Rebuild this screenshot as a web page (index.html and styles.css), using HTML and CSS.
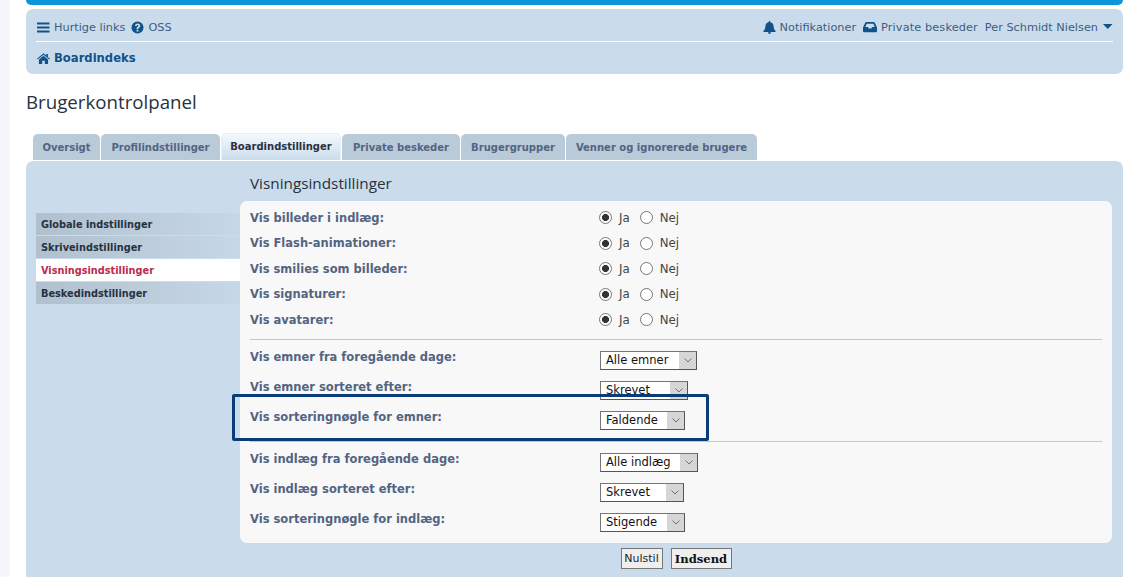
FILE: index.html
```html
<!DOCTYPE html>
<html lang="da">
<head>
<meta charset="utf-8">
<title>Brugerkontrolpanel</title>
<link rel="stylesheet" href="styles.css">
</head>
<body>
<div class="wrap">
  <div class="topbar"></div>
  <nav class="navbar">
    <div class="navrow">
      <div class="navgroup">
        <a class="navlink"><svg class="ico" viewBox="0 0 14 14"><path d="M0 1.5h13.5v2.2H0zM0 5.9h13.5v2.2H0zM0 10.300h13.5v2.200H0z"/></svg>Hurtige links</a>
        <a class="navlink"><svg class="ico" viewBox="0 0 14 14"><path fill-rule="evenodd" d="M7 .5a6.500 6.500 0 1 0 0 13 6.500 6.500 0 0 0 0-13zM6 9.300h2v1.900H6zM4.200 5.400C4.300 3.700 5.500 2.700 7.100 2.700c1.600 0 2.900 1 2.900 2.400 0 1.200-.7 1.700-1.400 2.200-.5.300-.7.500-.7 1v.3H6v-.5c0-1 .5-1.500 1.200-2 .5-.3.800-.5.800-1 0-.4-.4-.8-.9-.8-.6 0-1 .4-1.100 1z"/></svg>OSS</a>
      </div>
      <div class="navgroup right">
        <a class="navlink"><svg class="ico" viewBox="0 0 14 14"><path d="M7 0c.5 0 .9.400.9.900v.4c2.100.4 3.500 2 3.500 4.200 0 3.500 1.300 4.400 2.100 5.300.2.200.3.400.2.600-.1.300-.3.400-.6.400H.9c-.3 0-.5-.1-.6-.4-.1-.2 0-.4.2-.6.800-.9 2.100-1.800 2.100-5.300 0-2.200 1.400-3.800 3.500-4.200V.9C6.100.400 6.500 0 7 0zM5.300 12.200h3.400C8.700 13.200 7.900 14 7 14s-1.700-.8-1.700-1.800z"/></svg>Notifikationer</a>
        <a class="navlink spaced"><svg class="ico wide" viewBox="0 0 14 14"><path fill-rule="evenodd" d="M3.300 2h7.400c.5 0 .9.300 1.100.7L13.800 7c.1.200.2.500.2.700v3.300c0 .7-.6 1.300-1.300 1.300H1.300C.6 12.300 0 11.700 0 11V7.700c0-.2.100-.5.200-.7l2-4.300c.2-.4.600-.7 1.100-.7zM3.700 3.700 2.200 7h2.700l.8 1.500h2.600L9.100 7h2.700l-1.500-3.300z"/></svg>Private beskeder</a>
        <a class="navlink">Per Schmidt Nielsen<svg class="caret" viewBox="0 0 10 6"><path d="M0 0h9.500L4.750 5z"/></svg></a>
      </div>
    </div>
    <div class="navrow crumbs">
      <a class="crumb"><svg class="ico" viewBox="0 0 14 14"><path d="M7 1.400 0 7.200l.7.900L7 2.900l6.300 5.200.7-.9-2.300-1.900V2.200h-1.800v1.600zM2.100 8.200v4.700h3.500V9.500h2.800v3.400h3.500V8.200L7 4.100z"/></svg>Boardindeks</a>
    </div>
  </nav>

  <h2 class="pagetitle">Brugerkontrolpanel</h2>

  <div class="tabs">
    <a class="tab">Oversigt</a>
    <a class="tab">Profilindstillinger</a>
    <a class="tab active">Boardindstillinger</a>
    <a class="tab">Private beskeder</a>
    <a class="tab">Brugergrupper</a>
    <a class="tab">Venner og ignorerede brugere</a>
  </div>

  <section class="panel">
    <aside class="side">
      <a class="sideitem">Globale indstillinger</a>
      <a class="sideitem">Skriveindstillinger</a>
      <a class="sideitem current">Visningsindstillinger</a>
      <a class="sideitem">Beskedindstillinger</a>
    </aside>
    <div class="main">
      <h2 class="maintitle">Visningsindstillinger</h2>
      <div class="box">
        <div class="group radios">
          <div class="row"><span class="lbl">Vis billeder i indlæg:</span><span class="ctl"><i class="radio on"></i><span class="opt">Ja</span><i class="radio"></i><span class="opt">Nej</span></span></div>
          <div class="row"><span class="lbl">Vis Flash-animationer:</span><span class="ctl"><i class="radio on"></i><span class="opt">Ja</span><i class="radio"></i><span class="opt">Nej</span></span></div>
          <div class="row"><span class="lbl">Vis smilies som billeder:</span><span class="ctl"><i class="radio on"></i><span class="opt">Ja</span><i class="radio"></i><span class="opt">Nej</span></span></div>
          <div class="row"><span class="lbl">Vis signaturer:</span><span class="ctl"><i class="radio on"></i><span class="opt">Ja</span><i class="radio"></i><span class="opt">Nej</span></span></div>
          <div class="row"><span class="lbl">Vis avatarer:</span><span class="ctl"><i class="radio on"></i><span class="opt">Ja</span><i class="radio"></i><span class="opt">Nej</span></span></div>
        </div>
        <div class="group selects">
          <div class="row"><span class="lbl">Vis emner fra foregående dage:</span><span class="ctl"><span class="sel w97">Alle emner<b class="arrow"><svg viewBox="0 0 8 5"><path d="M.5.500 4 4 7.500.500"/></svg></b></span></span></div>
          <div class="row"><span class="lbl">Vis emner sorteret efter:</span><span class="ctl"><span class="sel w88">Skrevet<b class="arrow"><svg viewBox="0 0 8 5"><path d="M.5.500 4 4 7.500.500"/></svg></b></span></span></div>
          <div class="row"><span class="lbl">Vis sorteringnøgle for emner:</span><span class="ctl"><span class="sel w85">Faldende<b class="arrow"><svg viewBox="0 0 8 5"><path d="M.5.500 4 4 7.500.500"/></svg></b></span></span></div>
        </div>
        <div class="group selects">
          <div class="row"><span class="lbl">Vis indlæg fra foregående dage:</span><span class="ctl"><span class="sel w98">Alle indlæg<b class="arrow"><svg viewBox="0 0 8 5"><path d="M.5.500 4 4 7.500.500"/></svg></b></span></span></div>
          <div class="row"><span class="lbl">Vis indlæg sorteret efter:</span><span class="ctl"><span class="sel w84">Skrevet<b class="arrow"><svg viewBox="0 0 8 5"><path d="M.5.500 4 4 7.500.500"/></svg></b></span></span></div>
          <div class="row"><span class="lbl">Vis sorteringnøgle for indlæg:</span><span class="ctl"><span class="sel w85">Stigende<b class="arrow"><svg viewBox="0 0 8 5"><path d="M.5.500 4 4 7.500.500"/></svg></b></span></span></div>
        </div>
      </div>
      <div class="actions">
        <button class="btn" type="button">Nulstil</button>
        <button class="btn strong" type="button">Indsend</button>
      </div>
    </div>
  </section>
</div>
<div class="annotation"></div>
</body>
</html>
```
FILE: styles.css
```css
* { box-sizing: border-box; }
html, body { margin: 0; height: 577px; overflow: hidden; }
body {
  position: relative;
  background: #f5f7fa;
  font-family: "DejaVu Sans", Verdana, sans-serif;
  font-size: 11px;
  color: #536482;
  padding-left: 10px;
}
.wrap { background: #fff; height: 577px; padding-left: 16px; overflow: hidden; }
a { text-decoration: none; }

.topbar { height: 5px; background: #0d95d9; border-radius: 0 0 7px 7px; }
.navbar {
  margin-top: 4px;
  height: 65px;
  background: #cadceb;
  border-radius: 7px;
  padding: 0 10px;
}
.navrow { display: flex; justify-content: space-between; align-items: center; }
.navrow:first-child { height: 33px; border-bottom: 1px solid #fff; padding-top: 4px; }
.navgroup { display: flex; gap: 6px; align-items: center; padding-left: 1px; }
.navgroup.right { gap: 7px; padding-left: 0; }
.navlink { display: inline-flex; align-items: center; color: #3d5c82; font-size: 11.300px; white-space: nowrap; }
.navlink.spaced { letter-spacing: .12px; }
.ico { width: 13px; height: 13px; margin-right: 4px; fill: #105289; flex: none; }
.ico.wide { width: 14px; height: 14px; }
.caret { width: 10px; height: 6px; margin-left: 5px; fill: #105289; }
.crumbs { justify-content: flex-start; height: 32px; padding-left: 1px; }
.crumb { display: inline-flex; align-items: center; font-weight: bold; color: #105289; font-size: 11.600px; }

.pagetitle {
  margin: 0;
  padding-top: 16px;
  height: 59px;
  font-family: "Open Sans", "Noto Sans", sans-serif;
  font-weight: 400;
  font-size: 18.700px;
  line-height: 24px;
  color: #28313f;
}

.tabs { display: flex; gap: 1px; padding-left: 7px; height: 27px; align-items: flex-end; }
.tab {
  height: 26px;
  display: flex;
  align-items: center;
  justify-content: center;
  background: #b9cad9;
  border-radius: 5px 5px 0 0;
  font-size: 10px;
  font-weight: bold;
  color: #536482;
  white-space: nowrap;
}
.tab:nth-child(1) { width: 67px; }
.tab:nth-child(2) { width: 119px; }
.tab:nth-child(3) { width: 120px; }
.tab:nth-child(4) { width: 118px; }
.tab:nth-child(5) { width: 104px; }
.tab:nth-child(6) { width: 191px; }
.tab.active {
  height: 27px;
  position: relative;
  background: linear-gradient(#f4f9fd, #cadceb);
  border: 1px solid #e6eff6;
  border-bottom: 0;
  color: #28313f;
  padding-bottom: 2px;
}

.panel {
  margin-top: 1px;
  height: 430px;
  background: #cadceb;
  border-radius: 7px;
  padding-left: 10px;
  display: flex;
}
.side { width: 204px; flex: none; padding-top: 52px; display: flex; flex-direction: column; }
.sideitem {
  height: 22px;
  margin-bottom: 1px;
  padding-left: 5px;
  display: flex;
  align-items: center;
  font-size: 9.750px;
  font-weight: bold;
  color: #28313f;
  background: linear-gradient(90deg, #b0c0cf, #c6d7e6);
}
.sideitem.current { background: #fff; color: #bc2a4d; }

.main { width: 872px; flex: none; }
.maintitle {
  margin: 0;
  height: 40px;
  padding: 12px 0 0 10px;
  font-family: "Open Sans", "Noto Sans", sans-serif;
  font-weight: 400;
  font-size: 15.300px;
  line-height: 20px;
  color: #28313f;
}
.box {
  height: 342px;
  background: #f8f8f8;
  border-radius: 7px;
  padding: 4px 10px 0;
}
.group { display: flex; flex-direction: column; }
.group.radios { height: 134px; }
.group.radios .row { height: 25.500px; }
.group.selects { border-top: 1px solid #b9c9d8; height: 102px; padding-top: 5px; }
.group.selects .row { height: 30px; }
.row { display: flex; align-items: center; flex: none; }
.lbl { width: 350px; flex: none; font-size: 11.500px; font-weight: bold; color: #536482; }
.selects .lbl { position: relative; top: -3px; }
.ctl { display: flex; align-items: center; color: #333; }
.radios .ctl { margin-left: -1px; }
.radio {
  width: 13px; height: 13px;
  border: 1px solid #777;
  border-radius: 50%;
  background: #fff;
  display: block;
  flex: none;
}
.radio.on { background: radial-gradient(circle, #333 0 3.200px, #fff 3.800px); }
.opt { font-size: 11.800px; color: #444; margin: 0 10px 0 7px; }

.sel {
  display: flex;
  align-items: center;
  justify-content: space-between;
  height: 19px;
  background: #fff;
  border: 1px solid #767676;
  border-right-color: #555;
  border-bottom-color: #555;
  font-size: 11.500px;
  color: #111;
  padding-left: 5px;
}
.w97 { width: 97px; }
.w88 { width: 88px; }
.w85 { width: 85px; }
.w98 { width: 98px; }
.w84 { width: 84px; }
.arrow {
  width: 17px;
  height: 17px;
  background: #d6d6d6;
  display: flex;
  align-items: center;
  justify-content: center;
  flex: none;
}
.arrow svg { width: 8px; height: 5px; fill: none; stroke: #707070; stroke-width: 1; }

.actions { display: flex; justify-content: center; gap: 8px; padding-top: 5px; }
.btn {
  height: 21px;
  width: 42px;
  padding: 0;
  margin: 0;
  border: 1px solid #777;
  background: #efefef;
  font-family: "DejaVu Sans", Verdana, sans-serif;
  font-size: 11px;
  color: #222;
}
.btn.strong {
  width: 61px;
  font-family: "DejaVu Serif", "Liberation Serif", serif;
  font-weight: bold;
  font-size: 11.600px;
  color: #111;
}

.annotation {
  position: absolute;
  left: 232px;
  top: 394px;
  width: 477px;
  height: 47px;
  border: 3px solid #0a3d78;
  border-radius: 2px;
}
```
